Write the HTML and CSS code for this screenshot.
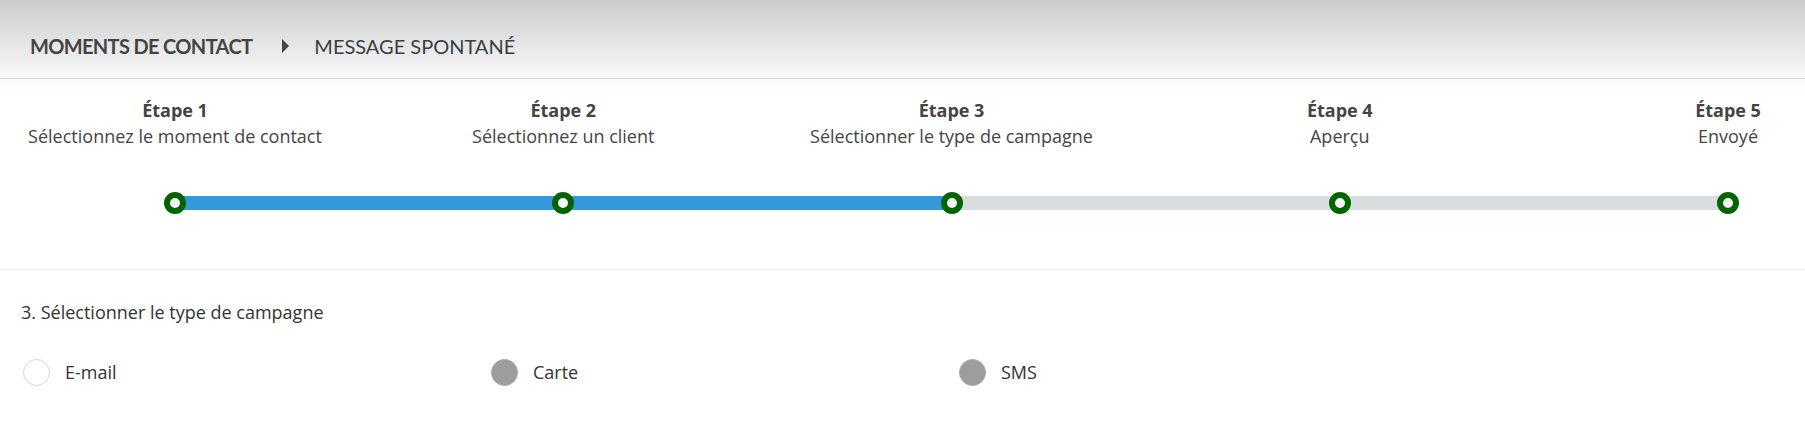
FILE: index.html
```html
<!DOCTYPE html>
<html lang="fr">
<head>
    <meta charset="UTF-8">
    <meta name="viewport" content="width=device-width, initial-scale=1.0">
    <title>Message spontané</title>
    <link rel="stylesheet" href="styles.css">
</head>
<body>
    <div class="topbar">
        <span class="crumb crumb-main">MOMENTS DE CONTACT</span>
        <span class="caret"></span>
        <span class="crumb">MESSAGE SPONTANÉ</span>
    </div>

    <div class="stepper">
        <div class="steps">
            <div class="step">
                <strong>Étape 1</strong>
                <span>Sélectionnez le moment de contact</span>
            </div>
            <div class="step">
                <strong>Étape 2</strong>
                <span>Sélectionnez un client</span>
            </div>
            <div class="step">
                <strong>Étape 3</strong>
                <span>Sélectionner le type de campagne</span>
            </div>
            <div class="step">
                <strong>Étape 4</strong>
                <span>Aperçu</span>
            </div>
            <div class="step">
                <strong>Étape 5</strong>
                <span>Envoyé</span>
            </div>
        </div>

        <div class="track">
            <span class="dot"></span>
            <span class="seg done"></span>
            <span class="dot"></span>
            <span class="seg done"></span>
            <span class="dot"></span>
            <span class="seg"></span>
            <span class="dot"></span>
            <span class="seg"></span>
            <span class="dot"></span>
        </div>
    </div>

    <div class="campaign">
        <p class="campaign-title">3. Sélectionner le type de campagne</p>
        <div class="options">
            <label class="option">
                <input type="radio" name="type" class="radio">
                E-mail
            </label>
            <label class="option">
                <input type="radio" name="type" class="radio" disabled>
                Carte
            </label>
            <label class="option">
                <input type="radio" name="type" class="radio" disabled>
                SMS
            </label>
        </div>
    </div>
</body>
</html>
```

FILE: styles.css
```css
body {
    margin: 0;
    font-family: "Open Sans", Arial, sans-serif;
    font-size: 18px;
    line-height: 1.42857;
    color: #444;
    background: #fff;
}
.topbar {
    box-sizing: border-box;
    height: 79px;
    padding: 14px 0 0 30px;
    display: flex;
    align-items: center;
    background: linear-gradient(#cccccc, #f9f9f9);
    border-bottom: 1px solid #d4d4d4;
    font-family: Lato, "Open Sans", sans-serif;
    font-size: 20px;
    line-height: 1.2;
}
.crumb {
    color: #3a3f45;
}
.crumb-main {
    font-weight: bold;
    color: #444;
    letter-spacing: -0.65px;
}
.caret {
    width: 0;
    height: 0;
    margin: 0 25px 0 30px;
    border-left: 7px solid #444;
    border-top: 7px solid transparent;
    border-bottom: 7px solid transparent;
}
.stepper {
    padding: 19px 0 55px;
    background: linear-gradient(#fafafa, #fff 14px);
    border-bottom: 1px solid #ececec;
}
.steps {
    display: flex;
    justify-content: space-between;
    padding: 0 77px 0 175px;
}
.step {
    width: 0;
    display: flex;
    flex-direction: column;
    align-items: center;
    white-space: nowrap;
}
.step strong {
    color: #444;
}
.track {
    display: flex;
    align-items: center;
    margin: 43px 66px 0 164px;
    height: 22px;
}
.dot {
    position: relative;
    z-index: 1;
    box-sizing: border-box;
    width: 22px;
    height: 22px;
    border: 6px solid #006400;
    border-radius: 50%;
    background: #f7f7f7;
}
.seg {
    flex: 1;
    height: 14px;
    margin: 0 -8px;
    background: #d9dde0;
}
.seg.done {
    background: #3498db;
}
.campaign {
    padding: 30px 21px;
    color: #333;
}
.campaign-title {
    margin: 0 0 33px;
}
.options {
    display: grid;
    grid-template-columns: repeat(3, 468px);
}
.option {
    display: flex;
    align-items: center;
    gap: 15px;
    margin-left: 2px;
}
.radio {
    appearance: none;
    margin: 0;
    width: 27px;
    height: 27px;
    border: 1px solid #d6d6d6;
    border-radius: 50%;
    background: #fff;
}
.radio:disabled {
    background: #9d9d9d;
    border-color: #a9a9a9;
}
```
